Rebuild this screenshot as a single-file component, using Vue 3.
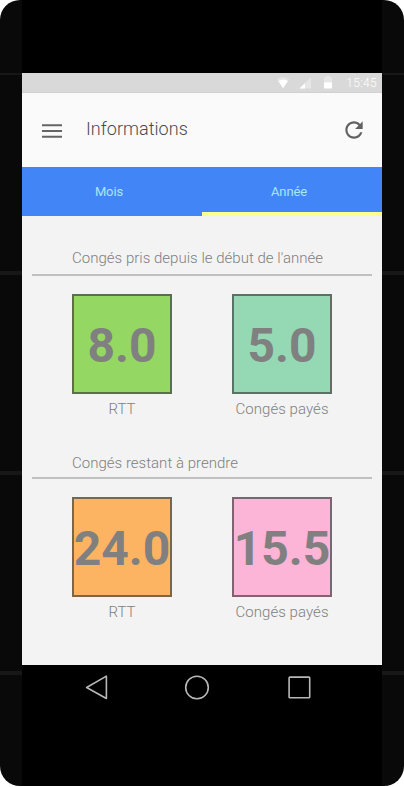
<script setup>
const tabs = [
  { label: 'Mois', active: false },
  { label: 'Année', active: true },
]

const sections = [
  {
    title: "Congés pris depuis le début de l'année",
    kind: 'taken',
    counters: [
      { value: '8.0', label: 'RTT', tone: 'green' },
      { value: '5.0', label: 'Congés payés', tone: 'mint' },
    ],
  },
  {
    title: 'Congés restant à prendre',
    kind: 'left',
    counters: [
      { value: '24.0', label: 'RTT', tone: 'orange' },
      { value: '15.5', label: 'Congés payés', tone: 'pink' },
    ],
  },
]
</script>

<template>
  <div class="phone">
    <div class="screen">
      <div class="status-bar">
        <svg class="status-icons" width="60" height="20" viewBox="0 0 60 20">
          <path d="M0 6.5Q6 1.5 12.2 6.5L6.1 15.3Z" fill="#e6e6e6" />
          <path d="M1.5 8Q6 5 10.8 8L6.1 15.3Z" fill="#fff" />
          <path d="M22.5 15.5L34 4.3V15.5Z" fill="#e6e6e6" />
          <path d="M22.5 15.5L28 10.2V15.5Z" fill="#fff" />
          <path d="M47 5.2Q47 4.2 48 4.2H48.7V3H53.3V4.2H54Q55 4.2 55 5.2V10H47Z" fill="#e6e6e6" />
          <path d="M47 9.5H55V14.5Q55 15.5 54 15.5H48Q47 15.5 47 14.5Z" fill="#fff" />
        </svg>
        <span class="clock">15:45</span>
      </div>

      <header class="app-bar">
        <svg class="menu" width="20" height="14" viewBox="0 0 20 14">
          <path d="M0 1.2H20M0 7H20M0 12.7H20" stroke="#656565" stroke-width="2" />
        </svg>
        <h1 class="title">Informations</h1>
        <svg class="refresh" width="26" height="26" viewBox="0 0 24 24">
          <path
            fill="#616161"
            d="M17.65 6.35C16.2 4.9 14.21 4 12 4c-4.42 0-7.99 3.58-7.99 8s3.57 8 7.99 8c3.73 0 6.84-2.55 7.73-6h-2.08c-.82 2.33-3.04 4-5.65 4-3.31 0-6-2.69-6-6s2.69-6 6-6c1.66 0 3.14.69 4.22 1.78L13 11h7V4l-2.35 2.35z"
          />
        </svg>
      </header>

      <nav class="tabs">
        <div v-for="tab in tabs" :key="tab.label" class="tab" :class="{ active: tab.active }">
          {{ tab.label }}
        </div>
      </nav>

      <main class="content">
        <section v-for="section in sections" :key="section.kind" class="section" :class="section.kind">
          <h2 class="section-title">{{ section.title }}</h2>
          <div class="counters">
            <div v-for="counter in section.counters" :key="counter.label" class="counter">
              <div class="box" :class="counter.tone">{{ counter.value }}</div>
              <div class="label">{{ counter.label }}</div>
            </div>
          </div>
        </section>
      </main>

      <footer class="system-nav">
        <svg width="26" height="26" viewBox="0 0 26 26">
          <path d="M2.6 13.5L22.4 2.1V24.5Z" />
        </svg>
        <svg width="26" height="26" viewBox="0 0 26 26">
          <circle cx="13" cy="13.5" r="11.3" />
        </svg>
        <svg width="26" height="26" viewBox="0 0 26 26">
          <rect x="3.1" y="3.1" width="20.6" height="20.6" rx="0.8" />
        </svg>
      </footer>
    </div>
  </div>
</template>

<style>
body {
  background: #fff;
}
</style>

<style scoped>
.phone {
  box-sizing: border-box;
  width: 404px;
  height: 786px;
  padding: 0 22px;
  overflow: hidden;
  border-radius: 20px;
  background:
    linear-gradient(#171717, #171717) 0 73px / 100% 2px no-repeat,
    linear-gradient(#171717, #171717) 0 271px / 100% 4px no-repeat,
    linear-gradient(#171717, #171717) 0 471px / 100% 4px no-repeat,
    linear-gradient(#171717, #171717) 0 671px / 100% 4px no-repeat,
    #090909;
  font-family: Roboto, sans-serif;
  font-weight: 300;
}

.screen {
  box-sizing: border-box;
  height: 786px;
  padding-top: 73px;
  background: #000;
}

.status-bar {
  box-sizing: border-box;
  display: flex;
  align-items: center;
  justify-content: flex-end;
  gap: 9px;
  height: 20px;
  padding-right: 5px;
  border-bottom: 1px solid #d0d0d0;
  background: #d9d9d9;
  color: #fff;
}

.clock {
  font-size: 12px;
  line-height: 20px;
  letter-spacing: 0.3px;
}

.app-bar {
  box-sizing: border-box;
  display: flex;
  align-items: center;
  height: 74px;
  padding: 0 15px 0 20px;
  background: #fafafa;
}

.menu {
  margin-top: 2px;
}

.title {
  flex: 1;
  margin: 0 0 2px 24px;
  color: #4a4a4a;
  font-size: 18px;
  font-weight: 300;
  line-height: 24px;
  letter-spacing: 0.04px;
}

.tabs {
  display: flex;
  height: 49px;
  background: #4285f7;
}

.tab {
  box-sizing: border-box;
  flex: 1;
  padding: 1px 6px 0 0;
  border-bottom: 4px solid transparent;
  color: #a9e6f7;
  font-size: 13px;
  font-weight: 400;
  line-height: 48px;
  letter-spacing: -0.1px;
  text-align: center;
}

.tab.active {
  border-bottom-color: #ffff8d;
}

.content {
  box-sizing: border-box;
  height: 449px;
  padding: 31px 10px 0;
  background: #f3f3f3;
  color: #808080;
}

.section {
  height: 205px;
}

.section-title {
  box-sizing: border-box;
  height: 29px;
  margin: 0;
  padding-left: 40px;
  border-bottom: 2px solid #c0c0c0;
  font-size: 15px;
  font-weight: 300;
  line-height: 22px;
  letter-spacing: 0.02px;
}

.left .section-title {
  height: 27px;
}

.counters {
  display: flex;
  gap: 60px;
  padding: 18px 40px 0;
}

.counter {
  width: 100px;
}

.box {
  box-sizing: border-box;
  display: flex;
  justify-content: center;
  height: 100px;
  border: 2px solid;
  font-size: 48px;
  font-weight: 700;
  line-height: 99px;
  white-space: nowrap;
}

.box.green {
  border-color: #5c6f4d;
  background: #94d763;
}

.box.mint {
  border-color: #5c7065;
  background: #94d8b4;
}

.box.orange {
  border-color: #7a664b;
  background: #fcb463;
}

.box.pink {
  border-color: #7a6570;
  background: #fcb4d7;
}

.label {
  padding-top: 4px;
  font-size: 15px;
  line-height: 22px;
  letter-spacing: 0.06px;
  text-align: center;
  white-space: nowrap;
}

.system-nav {
  display: flex;
  gap: 75px;
  padding: 9px 0 0 62px;
}

.system-nav svg {
  fill: none;
  stroke: #b8b8b8;
  stroke-width: 1.6;
  stroke-linejoin: round;
}

.system-nav svg:nth-child(2) {
  margin: 0 1px 0 -1px;
}
</style>
